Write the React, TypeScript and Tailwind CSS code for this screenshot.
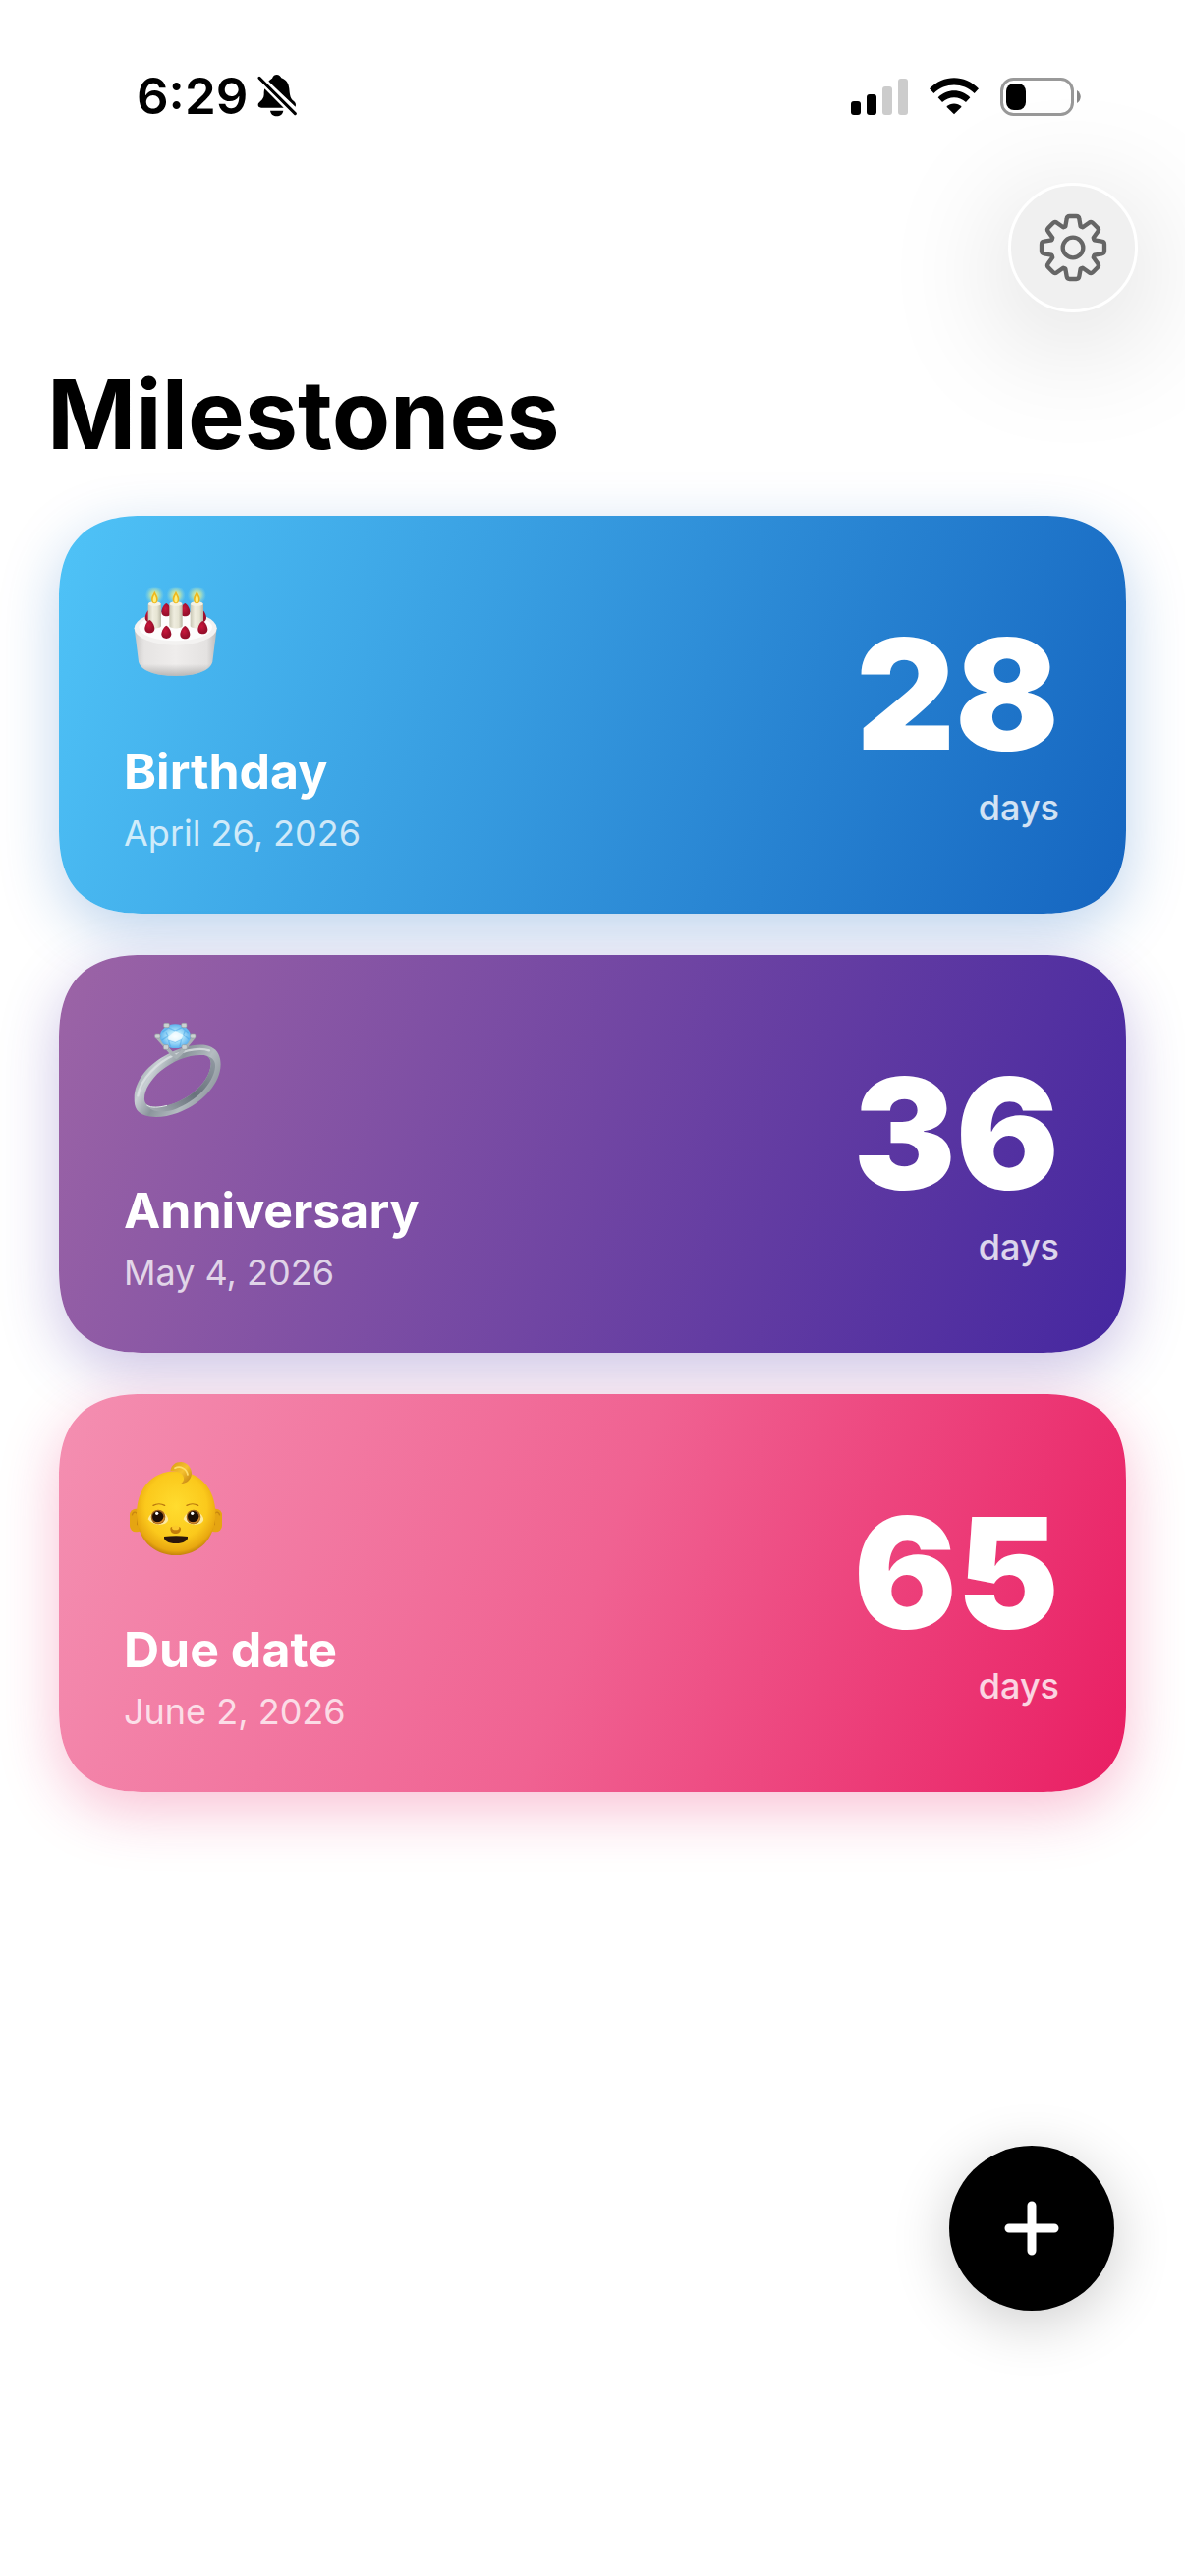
import type { ReactNode } from "react";

const BellOffIcon = () => (
	<svg viewBox="0 0 120 132" className="h-11 w-10" aria-hidden="true">
		<path
			fill="#000"
			d="M22 43 80 101 H12 C5 101 1 97 2 91 C3 83 19 80 20 61 C20 54 20 49 22 43Z M34 20 C38 15 42 13 45 11 C48 3 53 0 59 0 C66 0 70 4 73 10 C88 15 95 26 97 43 C99 66 101 74 112 82 C117 87 118 91 116 98Z M39 110 H79 C77 121 69 127 59 127 C49 127 41 121 39 110Z"
		/>
		<path d="M6 10 115 119" stroke="#000" strokeWidth="9" strokeLinecap="round" />
	</svg>
);

const SignalIcon = () => (
	<svg viewBox="0 0 58 38" className="h-[38px] w-[58px]" aria-label="Signal">
		<rect x="0" y="24" width="10" height="14" rx="3" />
		<rect x="16" y="17" width="10" height="21" rx="3" />
		<rect x="32" y="9" width="10" height="29" rx="3" fill="#ccc" />
		<rect x="48" y="1" width="10" height="37" rx="3" fill="#ccc" />
	</svg>
);

const WifiIcon = () => (
	<svg viewBox="0 0 150 112" className="h-[38px] w-[50px]" aria-label="Wi-Fi">
		<path d="M0 33 C42-11 108-11 150 33 L137 47 C102 13 48 13 13 47Z" />
		<path d="M26 60 C54 32 96 32 124 60 L111 74 C90 55 60 55 39 74Z" />
		<path d="M52 88 C65 75 85 75 98 88 L75 111Z" />
	</svg>
);

const BatteryIcon = () => (
	<svg viewBox="0 0 82 39" className="h-[39px] w-[82px]" aria-label="Battery">
		<rect x="1.5" y="1.5" width="72" height="36" rx="12" fill="none" stroke="#999" strokeWidth="3" />
		<rect x="6" y="6" width="20" height="27" rx="8" />
		<path d="M78 13 C83 16 83 23 78 26Z" fill="#888" />
	</svg>
);

const TOOTH_ANGLES = [0, 45, 90, 135, 180, 225, 270, 315];

const GearIcon = () => (
	<svg viewBox="-108 -108 216 216" className="size-18 shrink-0" aria-hidden="true">
		<g fill="none" stroke="#666" strokeWidth="13" strokeLinecap="round" strokeLinejoin="round">
			{TOOTH_ANGLES.map((angle) => (
				<path
					key={angle}
					transform={`rotate(${angle})`}
					d="M-26-64 L-23-65 L-19-88 Q-18-96-10-96 H10 Q18-96 19-88 L23-65 L26-64"
				/>
			))}
			<circle r="31" />
		</g>
	</svg>
);

const Candle = ({ x }: { x: number }) => (
	<g transform={`translate(${x} 0)`}>
		<circle cy="108" r="29" fill="url(#glow)" />
		<path d="M-20 135 C-20 125 20 125 20 135 V200 C20 211 -20 211 -20 200Z" fill="url(#wax)" />
		<ellipse cy="134" rx="19" ry="7" fill="#f3f1e4" />
		<path d="M0 95 C5 106 10 111 10 120 C10 128 5 133 0 133 C-5 133 -10 128 -10 120 C-10 111 -5 106 0 95Z" fill="#eeb71c" />
		<path d="M0 106 C3 112 5 117 5 122 C5 127 3 130 0 130 C-3 130 -5 127 -5 122 C-5 117 -3 112 0 106Z" fill="#fff07a" />
	</g>
);

const Berry = ({ x, y }: { x: number; y: number }) => (
	<path
		transform={`translate(${x} ${y})`}
		d="M0-20 C7-18 15-3 15 6 C15 15 8 20 0 20 C-8 20 -15 15 -15 6 C-15-3 -7-18 0-20Z"
		fill="url(#berry)"
	/>
);

const CakeEmoji = () => (
	<svg viewBox="48 63 300 300" className="size-25" role="img" aria-label="Birthday cake">
		<defs>
			<radialGradient id="glow">
				<stop offset="0" stopColor="#fff48a" />
				<stop offset="0.5" stopColor="#d9f0a0" stopOpacity="0.6" />
				<stop offset="1" stopColor="#9fe0e0" stopOpacity="0" />
			</radialGradient>
			<linearGradient id="wax">
				<stop offset="0" stopColor="#c9c7b4" />
				<stop offset="0.35" stopColor="#efeddf" />
				<stop offset="0.7" stopColor="#e6e4d3" />
				<stop offset="1" stopColor="#b9b7a5" />
			</linearGradient>
			<radialGradient id="berry" cx="0.4" cy="0.4">
				<stop offset="0" stopColor="#c9173c" />
				<stop offset="1" stopColor="#980f2c" />
			</radialGradient>
			<linearGradient id="cakeSide">
				<stop offset="0" stopColor="#c9c7c6" />
				<stop offset="0.12" stopColor="#e6e4e3" />
				<stop offset="0.5" stopColor="#efedec" />
				<stop offset="0.88" stopColor="#e4e2e1" />
				<stop offset="1" stopColor="#bdbbba" />
			</linearGradient>
			<linearGradient id="cakeShade" x2="0" y2="1">
				<stop offset="0.75" stopColor="#777" stopOpacity="0" />
				<stop offset="1" stopColor="#777" stopOpacity="0.45" />
			</linearGradient>
		</defs>
		<path d="M80 208 L93 310 C98 338 144 354 206 354 C268 354 314 338 319 310 L332 208Z" fill="url(#cakeSide)" />
		<path d="M80 208 L93 310 C98 338 144 354 206 354 C268 354 314 338 319 310 L332 208Z" fill="url(#cakeShade)" />
		<ellipse cx="206" cy="208" rx="126" ry="52" fill="#f3f2f1" />
		<ellipse cx="206" cy="205" rx="112" ry="42" fill="#fdfdfd" />
		<Berry x={178} y={152} />
		<Berry x={235} y={152} />
		<Berry x={128} y={170} />
		<Berry x={285} y={170} />
		<Candle x={142} />
		<Candle x={207} />
		<Candle x={271} />
		<Berry x={127} y={203} />
		<Berry x={289} y={206} />
		<Berry x={178} y={220} />
		<Berry x={235} y={221} />
	</svg>
);

const RingEmoji = () => (
	<svg viewBox="48 54 300 300" className="size-25" role="img" aria-label="Ring">
		<defs>
			<linearGradient id="band" x1="0" y1="0.3" x2="1" y2="0.8">
				<stop offset="0" stopColor="#8d979e" />
				<stop offset="0.2" stopColor="#c8cfd3" />
				<stop offset="0.4" stopColor="#8b959c" />
				<stop offset="0.65" stopColor="#b4bcc1" />
				<stop offset="1" stopColor="#7c858c" />
			</linearGradient>
			<linearGradient id="innerBand" x1="0" y1="1" x2="1" y2="0">
				<stop offset="0" stopColor="#a9b1b7" />
				<stop offset="0.5" stopColor="#69727c" />
				<stop offset="1" stopColor="#939ca4" />
			</linearGradient>
			<radialGradient id="gem">
				<stop offset="0" stopColor="#f3fcff" />
				<stop offset="0.45" stopColor="#b3e6fb" />
				<stop offset="1" stopColor="#5eb2ee" />
			</radialGradient>
		</defs>
		{/* band */}
		<path
			fillRule="evenodd"
			fill="url(#band)"
			d="M80 293 C80 240 124 187 184 158 C225 136 283 122 315 137 C343 150 348 185 341 213 C329 265 273 317 213 338 C160 357 108 355 88 329 C81 319 80 306 80 293Z M111 298 C112 318 137 323 165 319 C232 310 309 252 314 190 C315 170 304 162 287 162 C249 160 199 178 160 211 C131 236 109 270 111 298Z"
		/>
		<path
			fill="url(#innerBand)"
			d="M118 313 C133 323 155 321 175 317 C240 303 309 250 314 190 C314 176 309 168 300 164 C320 169 329 181 327 199 C321 250 268 303 207 326 C174 338 130 340 118 313Z"
		/>
		<path
			d="M91 286 C99 235 151 184 201 162 C241 146 281 138 309 148"
			fill="none"
			stroke="#e0e5e7"
			strokeOpacity="0.75"
			strokeWidth="7"
			strokeLinecap="round"
		/>
		<path d="M118 315 C133 325 155 322 180 316" fill="none" stroke="#dfe4e6" strokeWidth="3" />
		{/* setting and stone */}
		<path d="M150 107 L197 160 L208 168 L220 158 L262 107" fill="none" stroke="#a9b2b6" strokeWidth="11" strokeLinejoin="round" />
		<path d="M178 70 L190 84 M232 70 L222 84" stroke="#b8c1c4" strokeWidth="12" />
		<ellipse cx="205" cy="104" rx="47" ry="37" fill="url(#gem)" />
		<path d="M166 91 L184 78 L205 87 L226 77 L245 94 M164 117 L184 104 L177 91 M247 115 L230 99 L235 86 M190 136 L184 116 L205 123 L224 114 L219 136" fill="none" stroke="#3c9de4" strokeOpacity="0.45" strokeWidth="4" />
		<path d="M184 104 L205 87 L230 99 L224 114 L205 123 L184 116Z" fill="#fff" fillOpacity="0.65" />
		<g fill="#cbd2d2" stroke="#939c9f" strokeWidth="2">
			<rect x="143" y="96" width="16" height="15" rx="4" />
			<rect x="251" y="96" width="16" height="15" rx="4" />
			<rect x="170" y="64" width="17" height="13" rx="4" />
			<rect x="224" y="64" width="16" height="13" rx="4" />
			<rect x="169" y="131" width="16" height="14" rx="4" />
			<rect x="225" y="131" width="16" height="14" rx="4" />
		</g>
	</svg>
);

const BabyEye = ({ x }: { x: number }) => (
	<g transform={`translate(${x} 237)`}>
		<path d="M-31 7 C-22-24 20-26 30 4 C32 12 28 15 21 20 C5 26 -18 24 -31 7Z" fill="#fdeaa0" />
		<circle r="22" fill="#a0621a" />
		<circle cx="-1" cy="-1" r="17" fill="#1d0d05" />
		<path d="M-8 17 C4 20 15 14 18 3" fill="none" stroke="#d58a2c" strokeWidth="4" strokeLinecap="round" />
		<circle cx="-4" cy="-11" r="5" fill="#fff" />
	</g>
);

const BabyEmoji = () => (
	<svg viewBox="48 60 300 300" className="size-25" role="img" aria-label="Baby">
		<defs>
			<radialGradient id="skin" cx="0.5" cy="0.42" r="0.6">
				<stop offset="0" stopColor="#ffdc2f" />
				<stop offset="0.65" stopColor="#fbc91c" />
				<stop offset="0.88" stopColor="#e9a810" />
				<stop offset="1" stopColor="#b9770b" />
			</radialGradient>
			<linearGradient id="curl" x2="1" y2="1">
				<stop offset="0" stopColor="#d99a15" />
				<stop offset="0.5" stopColor="#f6c22f" />
				<stop offset="1" stopColor="#bd7a0e" />
			</linearGradient>
		</defs>
		<rect x="66" y="212" width="40" height="71" rx="19" fill="#e5a512" />
		<rect x="308" y="212" width="40" height="71" rx="19" fill="#e5a512" />
		<path d="M73 232 C76 220 86 220 89 229 V262 M341 232 C338 220 328 220 325 229 V262" fill="none" stroke="#c98710" strokeWidth="4" />
		<path d="M207 97 C278 97 328 151 328 227 C328 303 278 354 207 354 C136 354 87 303 87 227 C87 151 136 97 207 97Z" fill="url(#skin)" />
		<path d="M190 97 C193 78 207 68 224 69 C244 72 256 89 255 106 C253 123 242 135 222 136 C232 129 234 119 227 109 C218 98 204 95 190 97Z" fill="url(#curl)" />
		<path d="M204 88 C220 79 240 89 243 108" fill="none" stroke="#ffdd6a" strokeWidth="5" strokeLinecap="round" />
		<path d="M138 202 C148 196 163 196 173 202 M240 202 C250 196 265 196 275 202" fill="none" stroke="#b9780f" strokeWidth="4" strokeLinecap="round" />
		<BabyEye x={153} />
		<BabyEye x={261} />
		<path d="M190 272 C190 266 198 267 206 267 C214 267 222 266 222 273 C222 284 214 288 206 288 C198 288 190 284 190 272Z" fill="#c27c0b" />
		<ellipse cx="206" cy="270" rx="11" ry="7" fill="#fbc82a" />
		<path d="M171 297 C195 294 220 294 243 297 C245 310 230 318 207 318 C184 318 169 310 171 297Z" fill="#2b160b" />
	</svg>
);

type Milestone = {
	title: string;
	date: string;
	days: number;
	icon: ReactNode;
	color: string;
};

const milestones: Milestone[] = [
	{
		title: "Birthday",
		date: "April 26, 2026",
		days: 28,
		icon: <CakeEmoji />,
		color: "from-[#4fc3f7] to-[#1565c0] shadow-[0_18px_60px_rgba(21,101,192,0.28)]",
	},
	{
		title: "Anniversary",
		date: "May 4, 2026",
		days: 36,
		icon: <RingEmoji />,
		color: "from-[#9c64a6] to-[#4527a0] shadow-[0_18px_60px_rgba(69,39,160,0.28)]",
	},
	{
		title: "Due date",
		date: "June 2, 2026",
		days: 65,
		icon: <BabyEmoji />,
		color: "from-[#f48fb1] via-[#f06292] to-[#e91e63] shadow-[0_18px_60px_rgba(233,30,99,0.28)]",
	},
];

const MilestoneCard = ({ title, date, days, icon, color }: Milestone) => (
	<li
		className={`flex items-center justify-between rounded-[72px] bg-linear-110/srgb pt-[66px] pr-[68px] pb-[61px] pl-[66px] text-white supports-[corner-shape:squircle]:rounded-[88px] supports-[corner-shape:squircle]:[corner-shape:superellipse(1.35)] ${color}`}
	>
		<div>
			{icon}
			<h2 className="mt-16 text-[50px] leading-[60px] font-bold">{title}</h2>
			<p className="mt-3 text-[36px] leading-[42px] text-white/75">{date}</p>
		</div>
		<div className="pt-1 text-right">
			<p className="text-[156px] leading-[172px] font-black">{days}</p>
			<p className="mt-2 text-[36px] leading-[42px] font-medium text-white/80">days</p>
		</div>
	</li>
);

export default function App() {
	return (
		<div className="flex min-h-screen flex-col overflow-hidden bg-white font-['Inter','Liberation_Sans',sans-serif] text-black">
			{/* Status bar */}
			<div className="flex items-center justify-between pt-[68px] pr-[106px] pl-[139px]">
				<div className="flex items-center gap-[10px]">
					<span className="text-[51px] leading-[60px] font-semibold">6:29</span>
					<BellOffIcon />
				</div>
				<div className="flex items-center gap-[22px]">
					<SignalIcon />
					<WifiIcon />
					<BatteryIcon />
				</div>
			</div>

			{/* Toolbar */}
			<div className="mt-[58px] flex justify-end px-12">
				<button
					type="button"
					aria-label="Settings"
					className="flex size-33 items-center justify-center rounded-full border-3 border-white bg-[#f0f0f0] shadow-[0_24px_130px_rgba(0,0,0,0.18)]"
				>
					<GearIcon />
				</button>
			</div>

			<main>
				<h1 className="mt-11 px-12 text-[97px] leading-[120px] font-bold">Milestones</h1>
				<ul className="mt-[43px] flex flex-col gap-[42px] px-15">
					{milestones.map((milestone) => (
						<MilestoneCard key={milestone.title} {...milestone} />
					))}
				</ul>
			</main>

			<button
				type="button"
				aria-label="Add milestone"
				className="mt-auto mr-18 mb-[270px] flex size-42 items-center justify-center self-end rounded-full bg-black shadow-[0_12px_60px_rgba(0,0,0,0.2)]"
			>
				<svg viewBox="0 0 56 56" className="size-14" aria-hidden="true">
					<path d="M28 5 V51 M5 28 H51" stroke="#fff" strokeWidth="9" strokeLinecap="round" />
				</svg>
			</button>
		</div>
	);
}
